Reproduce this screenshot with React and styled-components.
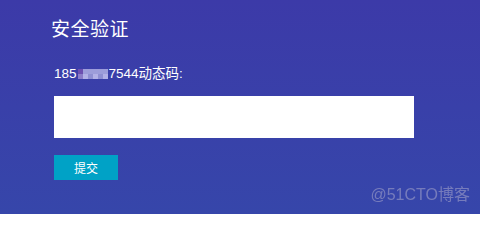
import styled, { createGlobalStyle } from 'styled-components';

const GlobalStyle = createGlobalStyle`
  html, body {
    margin: 0;
    padding: 0;
  }
  body {
    font-family: "Noto Sans CJK SC", "Liberation Sans", sans-serif;
  }
`;

const Page = styled.div`
  width: 480px;
  height: 214px;
  box-sizing: border-box;
  padding: 14px 0 0 51px;
  background: linear-gradient(180deg, #3c3aa8 0%, #3646aa 100%);
  position: relative;
  overflow: hidden;
  color: #ffffff;
`;

const Title = styled.div`
  font-size: 19px;
  line-height: 28px;
  letter-spacing: 0.5px;
`;

const Label = styled.div`
  margin: 24px 0 0 3px;
  font-family: "Liberation Sans", "Noto Sans CJK SC", sans-serif;
  font-size: 13.5px;
  line-height: 16px;
  display: flex;
  align-items: center;
`;

const Mosaic = styled.span`
  display: inline-grid;
  grid-template-columns: repeat(6, 5px);
  grid-template-rows: repeat(2, 5px);
  margin: 0 1px;
`;

const Cell = styled.span`
  background: ${(p) => p.$c};
`;

const Input = styled.input`
  display: block;
  margin: 14px 0 0 3px;
  width: 360px;
  height: 42px;
  box-sizing: border-box;
  border: none;
  outline: none;
  background: #ffffff;
  padding: 0 10px;
  font-size: 14px;
`;

const Submit = styled.button`
  display: block;
  margin: 17px 0 0 3px;
  width: 64px;
  height: 25px;
  border: none;
  background: #00a2c6;
  color: #ffffff;
  font-family: "Noto Sans CJK SC", sans-serif;
  font-size: 12px;
  padding: 0;
  cursor: pointer;
`;

const Watermark = styled.div`
  position: absolute;
  right: 10px;
  bottom: 9px;
  font-family: "Liberation Sans", "Noto Sans CJK SC", sans-serif;
  font-size: 16px;
  color: rgba(160, 160, 200, 0.6);
  filter: blur(0.4px);
`;

const cells = [
  '#6c4fb0', '#9d9dda', '#9d9dda', '#9d9dda', '#9d9dda', '#9d9dda',
  '#8a7cc8', '#b2b0e6', '#8f8fd2', '#b2b0e6', '#8f8fd2', '#b2b0e6',
];

export default function App() {
  return (
    <>
      <GlobalStyle />
      <Page>
        <Title>安全验证</Title>
        <Label>
          185
          <Mosaic>
            {cells.map((c, i) => (
              <Cell key={i} $c={c} />
            ))}
          </Mosaic>
          7544动态码:
        </Label>
        <Input type="text" />
        <Submit>提交</Submit>
        <Watermark>@51CTO博客</Watermark>
      </Page>
    </>
  );
}
